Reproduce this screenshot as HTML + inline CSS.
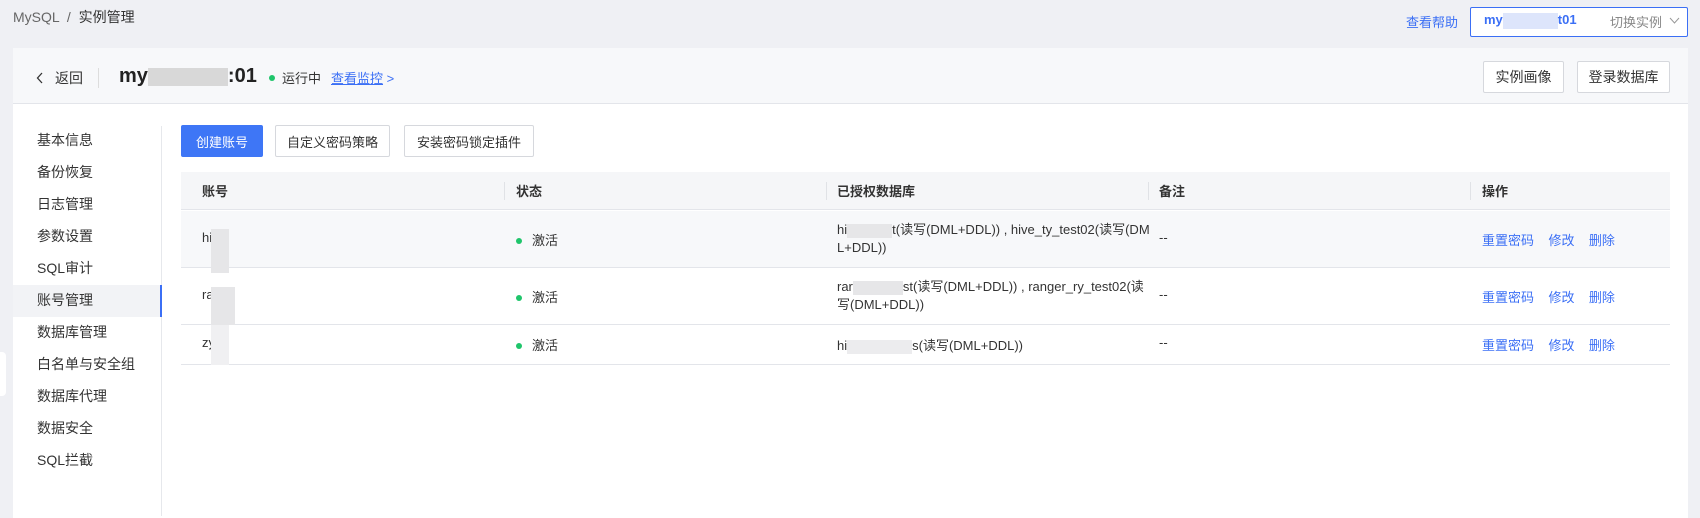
<!DOCTYPE html>
<html><head><meta charset="utf-8"><style>
*{margin:0;padding:0;box-sizing:border-box}
body{width:1700px;height:512px;overflow:hidden;background:#eff0f4;font-family:"Liberation Sans","Noto Sans CJK SC",sans-serif;color:#333;position:relative;font-size:13px}
.a{position:absolute;white-space:nowrap}
.blue{color:#3b6ff5}
.btn{position:absolute;border:1px solid #d6d8dd;background:#fff;border-radius:2px;display:flex;align-items:center;justify-content:center;font-size:13px;color:#333}
.blur{position:absolute;background:#e4e4e6}
.side{position:absolute;left:37px;font-size:14px;color:#333}
.dot{position:absolute;width:6px;height:6px;border-radius:50%;background:#1fc56b}
</style></head><body>
<div class="a" style="left:13px;top:7px;font-size:14px;color:#666">MySQL &nbsp;/&nbsp; <span style="color:#333">实例管理</span></div>
<div class="a blue" style="left:1406px;top:12px;font-size:13px">查看帮助</div>
<div class="a" style="left:1470px;top:7px;width:218px;height:30px;border:1px solid #3b6ff5;border-radius:2px;background:#fff"></div>
<div class="a" style="left:1484px;top:12px;font-size:13px;font-weight:bold;color:#3b6ff5">my<span style="display:inline-block;width:55px;height:16px;background:#dde5fb;vertical-align:middle"></span>t01</div>
<div class="a" style="left:1610px;top:12px;font-size:13px;color:#888">切换实例</div>
<svg class="a" style="left:1669px;top:17px" width="11" height="8"><path d="M1 1L5.5 6L10 1" stroke="#999" fill="none"/></svg>

<div class="a" style="left:13px;top:48px;width:1675px;height:470px;background:#fff"></div>
<div class="a" style="left:13px;top:48px;width:1675px;height:56px;background:#f7f8fa;border-bottom:1px solid #e3e5ea"></div>
<svg class="a" style="left:36px;top:72px" width="8" height="12"><path d="M6 1L1.5 6L6 11" stroke="#333" fill="none" stroke-width="1.3"/></svg>
<div class="a" style="left:55px;top:68px;font-size:14px">返回</div>
<div class="a" style="left:98px;top:68px;width:1px;height:20px;background:#ddd"></div>
<div class="a" style="left:119px;top:65px;font-size:20px;font-weight:bold;color:#222">my<span style="display:inline-block;width:80px;height:18px;background:#d8d8d8;vertical-align:middle"></span>:01</div>
<div class="dot" style="left:269px;top:75px"></div>
<div class="a" style="left:282px;top:68px;font-size:13px">运行中</div>
<div class="a blue" style="left:331px;top:68px;font-size:13px"><span style="text-decoration:underline">查看监控</span> &gt;</div>
<div class="btn" style="left:1483px;top:61px;width:81px;height:32px;font-size:14px">实例画像</div>
<div class="btn" style="left:1577px;top:61px;width:93px;height:32px;font-size:14px">登录数据库</div>

<div class="a" style="left:161px;top:126px;width:1px;height:390px;background:#e6e8ec"></div>
<div class="a" style="left:13px;top:285px;width:149px;height:32px;background:#f2f3f6;border-right:2px solid #3b6ff5"></div>
<div class="side" style="top:130px">基本信息</div>
<div class="side" style="top:162px">备份恢复</div>
<div class="side blue" style="top:194px">日志管理</div>
<div class="side" style="top:226px">参数设置</div>
<div class="side" style="top:258px">SQL审计</div>
<div class="side blue" style="top:290px">账号管理</div>
<div class="side" style="top:322px">数据库管理</div>
<div class="side" style="top:354px">白名单与安全组</div>
<div class="side" style="top:386px">数据库代理</div>
<div class="side" style="top:418px">数据安全</div>
<div class="side" style="top:450px">SQL拦截</div>
<div class="a" style="left:0;top:352px;width:6px;height:44px;background:#fff;border-radius:0 4px 4px 0"></div>

<div class="btn" style="left:181px;top:125px;width:82px;height:32px;background:#3e76f6;border-color:#3e76f6;color:#fff">创建账号</div>
<div class="btn" style="left:275px;top:125px;width:115px;height:32px">自定义密码策略</div>
<div class="btn" style="left:404px;top:125px;width:130px;height:32px">安装密码锁定插件</div>

<div class="a" style="left:181px;top:172px;width:1489px;height:38px;background:#f5f6f8;border-bottom:1px solid #e3e5ea"></div>
<div class="a" style="left:504px;top:182px;width:1px;height:18px;background:#e0e2e6"></div>
<div class="a" style="left:826px;top:182px;width:1px;height:18px;background:#e0e2e6"></div>
<div class="a" style="left:1148px;top:182px;width:1px;height:18px;background:#e0e2e6"></div>
<div class="a" style="left:1470px;top:182px;width:1px;height:18px;background:#e0e2e6"></div>
<div class="a" style="left:202px;top:181px;font-weight:bold">账号</div>
<div class="a" style="left:516px;top:181px;font-weight:bold">状态</div>
<div class="a" style="left:837px;top:181px;font-weight:bold">已授权数据库</div>
<div class="a" style="left:1159px;top:181px;font-weight:bold">备注</div>
<div class="a" style="left:1482px;top:181px;font-weight:bold">操作</div>

<div class="a" style="left:181px;top:211px;width:1489px;height:57px;background:#f7f8fa;border-bottom:1px solid #e3e5ea"></div>
<div class="a" style="left:181px;top:268px;width:1489px;height:57px;border-bottom:1px solid #e3e5ea"></div>
<div class="a" style="left:181px;top:325px;width:1489px;height:40px;border-bottom:1px solid #e3e5ea"></div>

<div class="a" style="left:202px;top:230px">hi</div><div class="blur" style="left:211px;top:229px;width:18px;height:44px;background:#e6e6e8"></div>
<div class="a" style="left:202px;top:287px">ra</div><div class="blur" style="left:211px;top:287px;width:24px;height:38px;background:#e6e6e8"></div>
<div class="a" style="left:202px;top:335px">zy</div><div class="blur" style="left:211px;top:325px;width:18px;height:40px;background:#f0f0f2"></div>

<div class="dot" style="left:516px;top:238px"></div><div class="a" style="left:532px;top:230px">激活</div>
<div class="dot" style="left:516px;top:295px"></div><div class="a" style="left:532px;top:287px">激活</div>
<div class="dot" style="left:516px;top:343px"></div><div class="a" style="left:532px;top:335px">激活</div>

<div class="a" style="left:837px;top:221px;line-height:18px">hi<span style="display:inline-block;width:45px;height:14px;background:#e6e6e8;vertical-align:middle"></span>t(读写(DML+DDL)) , hive_ty_test02(读写(DM<br>L+DDL))</div>
<div class="a" style="left:837px;top:278px;line-height:18px">rar<span style="display:inline-block;width:50px;height:14px;background:#e6e6e8;vertical-align:middle"></span>st(读写(DML+DDL)) , ranger_ry_test02(读<br>写(DML+DDL))</div>
<div class="a" style="left:837px;top:335px">hi<span style="display:inline-block;width:65px;height:14px;background:#ececee;vertical-align:middle"></span>s(读写(DML+DDL))</div>

<div class="a" style="left:1159px;top:230px">--</div>
<div class="a" style="left:1159px;top:287px">--</div>
<div class="a" style="left:1159px;top:335px">--</div>

<div class="a blue" style="left:1482px;top:230px">重置密码 &nbsp;&nbsp; 修改 &nbsp;&nbsp; 删除</div>
<div class="a blue" style="left:1482px;top:287px">重置密码 &nbsp;&nbsp; 修改 &nbsp;&nbsp; 删除</div>
<div class="a blue" style="left:1482px;top:335px">重置密码 &nbsp;&nbsp; 修改 &nbsp;&nbsp; 删除</div>
</body></html>
